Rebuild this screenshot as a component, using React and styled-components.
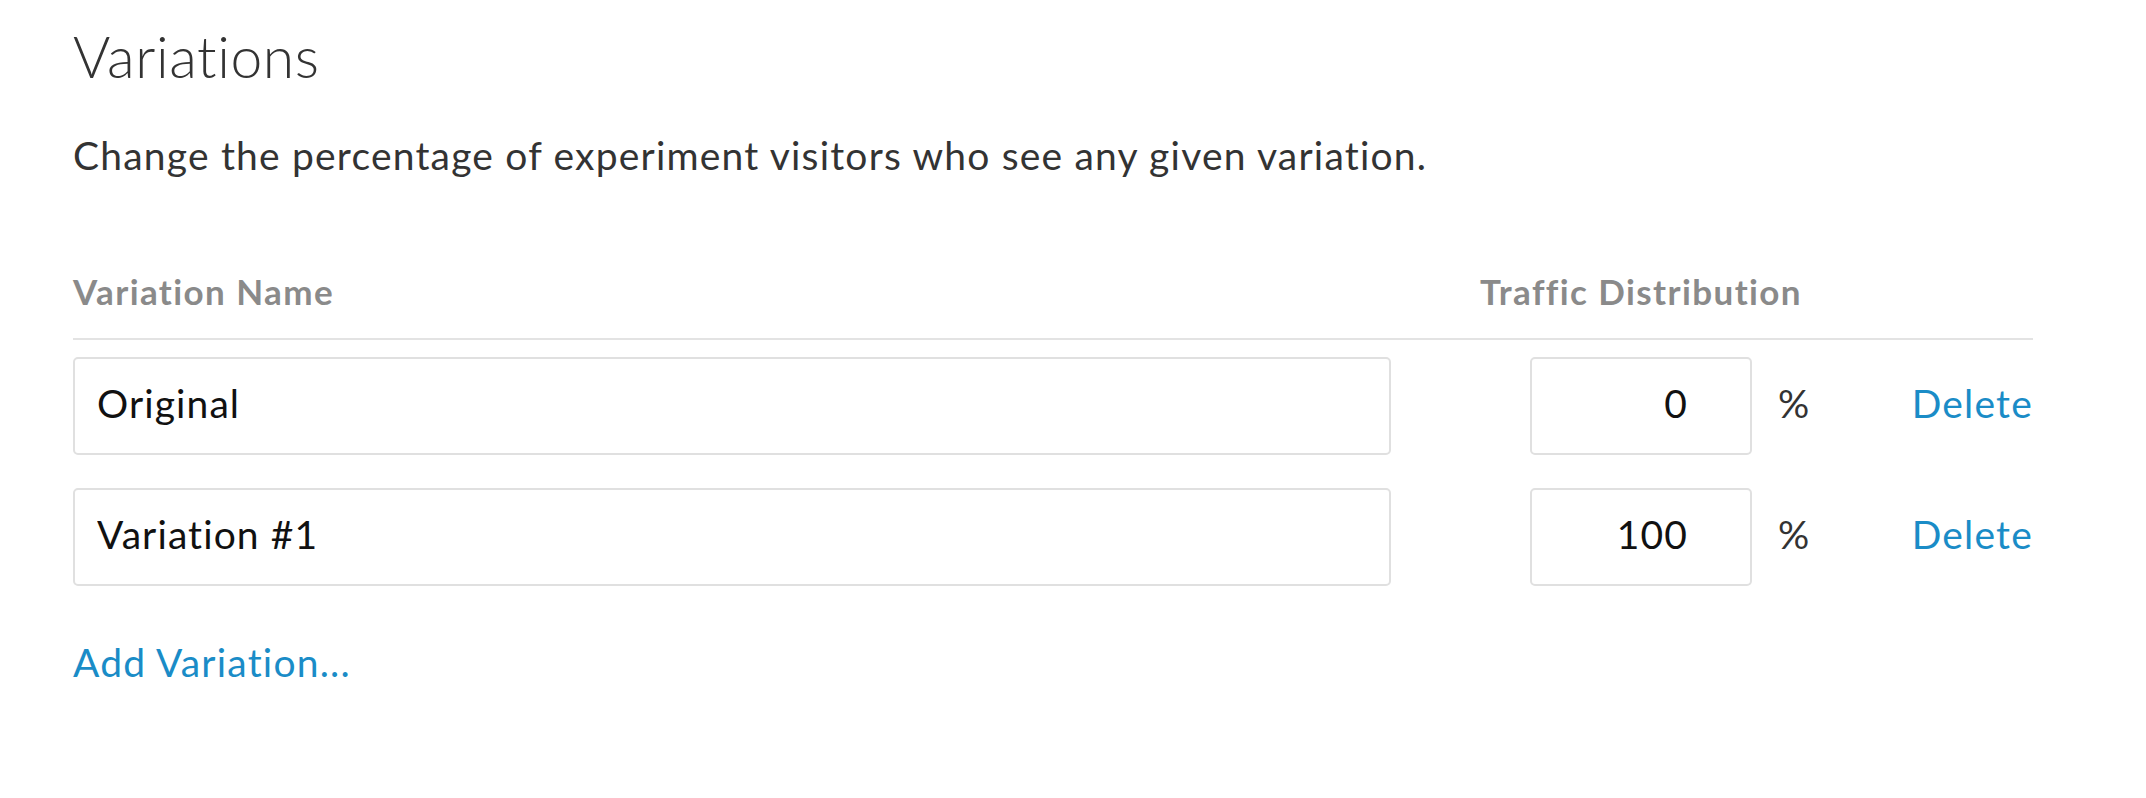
import styled, { createGlobalStyle } from "styled-components";

const GlobalStyle = createGlobalStyle`
  body {
    margin: 0;
    background: #ffffff;
    font-family: Lato, "Noto Sans", sans-serif;
    color: #333333;
  }
`;

const Page = styled.div`
  width: 1960px;
  padding: 28px 73px 0;
`;

const Title = styled.h2`
  margin: 0;
  font-size: 57px;
  font-weight: 300;
  line-height: 56px;
  letter-spacing: 0.6px;
  color: #333333;
`;

const Description = styled.p`
  margin: 47px 0 0;
  font-size: 39px;
  line-height: 48px;
  letter-spacing: 1.2px;
  color: #333333;
`;

const Table = styled.div`
  margin-top: 92px;
  display: grid;
  grid-template-columns: 1318px 139px 222px 1fr auto;
  align-items: center;
`;

const HeadCell = styled.div`
  grid-column: ${(p) => p.$col};
  justify-self: ${(p) => p.$align || "start"};
  white-space: nowrap;
  font-size: 35px;
  font-weight: 700;
  letter-spacing: 1.4px;
  color: #8a8a8a;
  line-height: 40px;
  padding-bottom: 27px;
`;

const Divider = styled.div`
  grid-column: 1 / -1;
  height: 2px;
  background: #e3e3e3;
  margin-bottom: 17px;
`;

const Input = styled.input`
  grid-column: ${(p) => p.$col};
  box-sizing: border-box;
  width: 100%;
  height: 98px;
  margin-bottom: 33px;
  border: 2px solid #e0e0e0;
  border-radius: 5px;
  padding: ${(p) => (p.$right ? "0 62px 6px 0" : "0 0 6px 22px")};
  text-align: ${(p) => (p.$right ? "right" : "left")};
  font-family: Lato, "Noto Sans", sans-serif;
  font-size: 39px;
  letter-spacing: 1.1px;
  color: #111111;
  background: #ffffff;
  outline: none;
`;

const Percent = styled.span`
  grid-column: 4;
  padding-left: 26px;
  margin-bottom: 39px;
  font-size: 39px;
  color: #333333;
`;

const LinkText = styled.a`
  font-size: 39px;
  letter-spacing: 1.2px;
  color: #1a8cc7;
  text-decoration: none;
  cursor: pointer;
`;

const DeleteLink = styled(LinkText)`
  grid-column: 5;
  justify-self: end;
  margin-bottom: 39px;
`;

const AddLink = styled(LinkText)`
  display: inline-block;
  margin-top: 20px;
`;

const variations = [
  { name: "Original", traffic: "0" },
  { name: "Variation #1", traffic: "100" },
];

export default function App() {
  return (
    <>
      <GlobalStyle />
      <Page>
        <Title>Variations</Title>
        <Description>
          Change the percentage of experiment visitors who see any given variation.
        </Description>
        <Table>
          <HeadCell $col={1}>Variation Name</HeadCell>
          <HeadCell $col={3} $align="center">
            Traffic Distribution
          </HeadCell>
          <Divider />
          {variations.map((v) => (
            <>
              <Input key={v.name} $col={1} defaultValue={v.name} />
              <Input $col={3} $right defaultValue={v.traffic} />
              <Percent>%</Percent>
              <DeleteLink>Delete</DeleteLink>
            </>
          ))}
        </Table>
        <AddLink>Add Variation...</AddLink>
      </Page>
    </>
  );
}
